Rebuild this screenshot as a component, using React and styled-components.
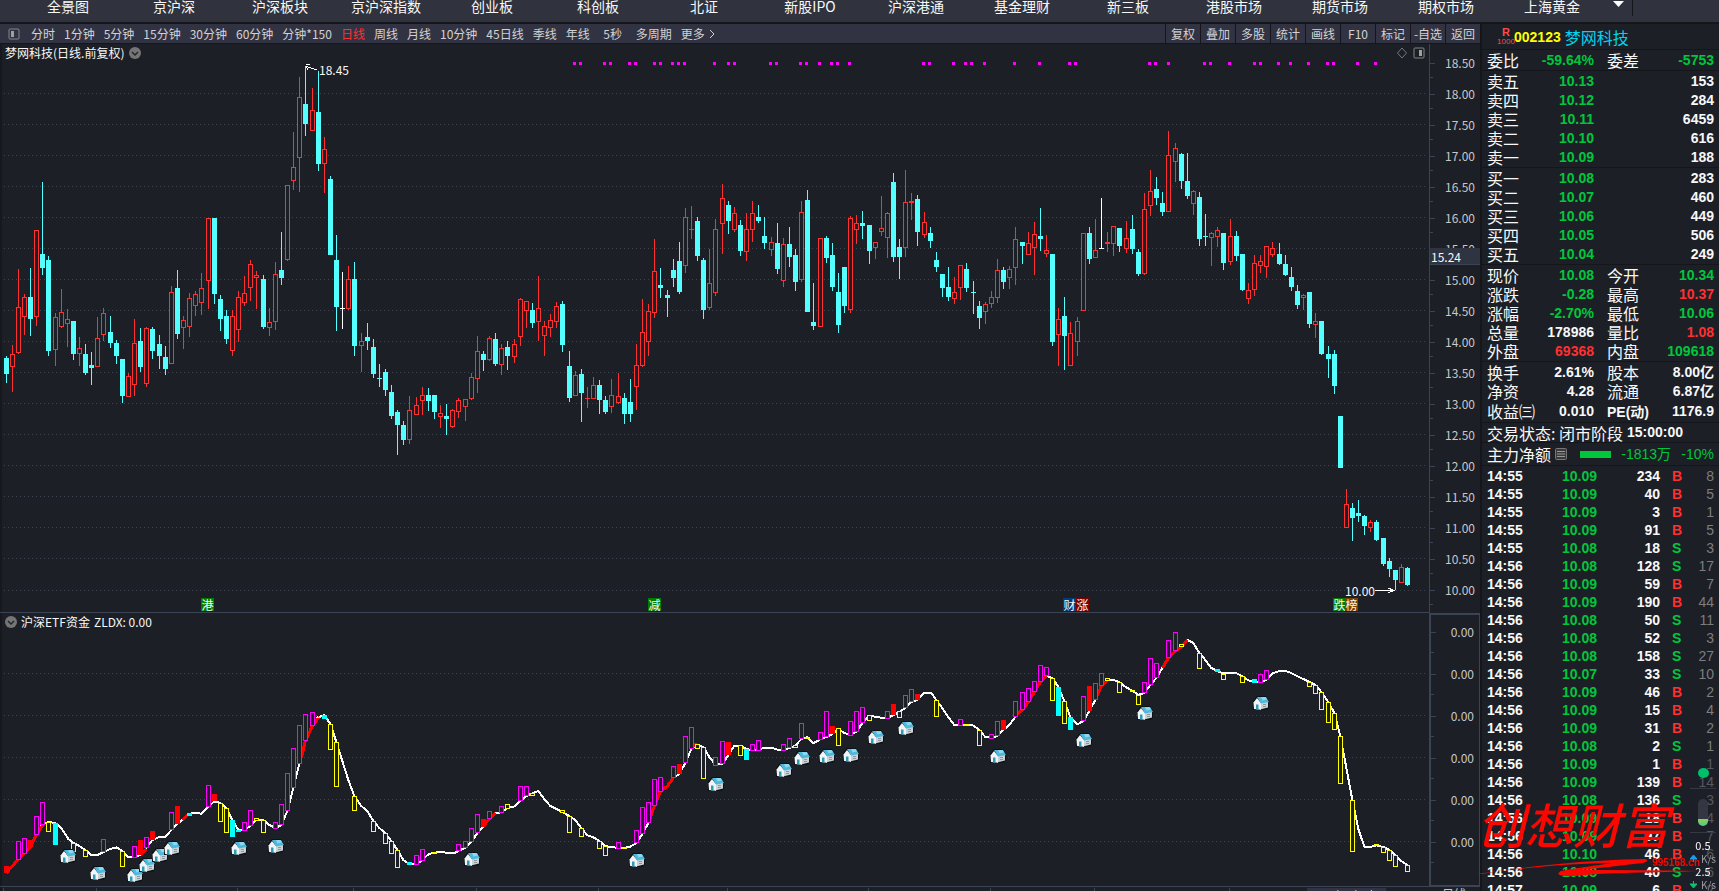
import React from "react";
import styled, { createGlobalStyle, css } from "styled-components";

const C = {
  bg: "#1c1f26",
  menu: "#30333e",
  bar: "#323342",
  rule: "#14161b",
  axis: "#3a4454",
  grid: "#3b4250",
  text: "#d2d2d2",
  white: "#f8f8f8",
  up: "#ff3030",
  down: "#54ffff",
  green: "#00c63c",
  dim: "#7d7d7d",
};

const CJK = '"Noto Sans CJK SC", sans-serif';

const Global = createGlobalStyle`
  * { box-sizing: border-box; }
  body { margin: 0; background: ${C.bg}; color: ${C.white}; font: 12px/16px ${CJK}; overflow: hidden; }
  button { font: inherit; color: inherit; background: none; border: 0; padding: 0; margin: 0; white-space: nowrap; }
  table { border-collapse: collapse; border-spacing: 0; }
`;

/* ---------- data ---------- */

const MENU = ["全景图", "京沪深", "沪深板块", "京沪深指数", "创业板", "科创板", "北证", "新股IPO", "沪深港通", "基金理财", "新三板", "港股市场", "期货市场", "期权市场", "上海黄金"];
const PERIODS = ["分时", "1分钟", "5分钟", "15分钟", "30分钟", "60分钟", "分钟*150", "日线", "周线", "月线", "10分钟", "45日线", "季线", "年线", "5秒", "多周期"];
const TOOLS = ["复权", "叠加", "多股", "统计", "画线", "F10", "标记", "-自选", "返回"];

/* Each block has an origin in chart pixels; rows count in thirds of a pixel:
   centre, high, body top, body bottom, low, kind (u rise, d fall, w flat). */
const CANDLES = [
  [0, 60, `19 888 894 942 969 d|37 855 882 921 996 u|55 627 741 879 882 u|73 702 711 771 825 u|91 624 711 777 828 d|109 510 510 771 798 u|127 366 582 624 645 d|145 588 600 873 888 d|166 759 771 870 918 u|184 687 756 801 804 u|202 747 777 792 861 u|220 783 783 882 900 d|238 831 864 882 918 u|256 852 882 939 945 d|274 876 915 924 975 d|292 771 834 921 921 u|310 744 759 825 843 u|331 768 816 849 864 d|349 840 849 888 912 d|367 897 897 1008 1029 d|385 939 948 1011 1011 u|403 777 849 975 1008 u|421 804 843 921 936 d|439 801 804 972 981 u|457 801 807 873 897 d|478 825 852 888 927 d|496 858 891 927 945 d|514 678 696 912 912 u|532 630 684 822 837 d|550 768 780 804 867 u|568 699 714 801 831 u|586 693 702 738 768 u|604 639 684 729 765 u|625 474 474 663 747 u|643 474 474 702 732 d|661 705 717 777 813 d|679 750 768 837 852 d|697 750 768 873 888 u|715 693 711 810 846 u|733 648 699 729 738 u|751 600 612 684 723 u|769 633 645 654 747 u|790 645 657 801 807 d|808 744 786 804 828 u|826 606 642 786 810 u|844 516 630 654 675 d|862 375 375 600 603 u|880 216 321 363 390 u|898 51 111 294 396 u|916 18 132 192 228 d|937 84 150 213 213 u|955 33 156 312 333 d|973 231 267 312 399 u|991 348 357 585 585 d|1009 525 600 741 813 d|1027 636 744 747 807 w|1045 618 657 747 750 u|1063 606 657 858 888 d|1084 819 843 858 936 u|1102 789 831 843 870 d|1120 837 861 942 954 d|1138 912 954 957 981 d|1156 927 936 990 1008 d|1174 975 996 1068 1077 d|1192 1050 1056 1095 1185 d|1210 1083 1095 1140 1155 d|1228 1008 1050 1140 1152 u|1249 1011 1035 1065 1065 u|1267 981 1005 1023 1065 u|1285 984 1005 1023 1053 d|1303 1005 1005 1056 1077 d|1321 1035 1059 1071 1104 u|1339 1032 1068 1077 1125 d|1357 1047 1050 1101 1104 u|1375 1014 1020 1056 1074 u|1396 1017 1017 1041 1083 u|1414 939 951 1017 1020 u|1432 828 873 957 999 u`],
  [470, 150, `40 603 612 630 663 d|58 558 564 630 633 u|76 549 567 642 648 d|94 582 594 645 675 u|112 573 591 618 660 d|133 567 582 621 639 u|151 444 447 561 588 u|169 453 453 483 534 u|187 459 480 519 534 d|205 378 474 516 573 u|223 513 528 558 618 u|241 492 510 534 561 u|259 456 468 516 534 u|277 453 462 585 606 d|298 603 648 744 756 d|316 663 675 738 738 u|334 657 672 729 816 d|352 711 744 747 774 u|370 681 705 747 747 u|388 690 705 750 792 d|406 738 750 786 792 d|424 687 735 771 789 u|445 669 738 759 762 u|463 729 744 792 822 d|481 687 756 792 816 d|499 582 645 711 780 u|517 447 546 648 651 u|535 462 483 576 618 u|553 267 363 489 504 u|571 354 405 414 444 d|592 420 435 444 501 d|610 327 360 384 411 d|628 276 333 426 432 d|646 174 201 348 369 u|664 168 237 240 267 u|682 201 213 318 333 d|700 324 330 480 507 d|718 297 399 474 480 u|736 207 237 429 438 u|757 102 144 222 312 u|775 153 165 213 252 d|793 171 189 240 246 u|811 210 225 303 318 d|829 189 237 306 333 u|847 153 189 240 276 u|865 165 201 213 219 d|883 201 258 279 297 d|904 261 276 300 318 u|922 219 279 357 372 d|940 264 282 393 411 u|958 231 282 321 351 d|976 297 315 396 423 d|994 153 186 390 396 u|1012 120 150 486 486 d|1030 399 516 528 540 d|1051 264 264 531 531 u|1069 258 264 324 339 d|1087 279 315 411 423 d|1105 369 426 525 549 d|1123 351 351 468 489 d|1141 198 204 480 489 u|1159 195 219 240 282 u|1177 183 219 228 267 d|1198 225 225 303 342 d|1216 276 276 294 327 u|1234 138 234 246 258 u|1252 186 189 264 324 u|1270 69 96 321 336 d|1288 267 291 321 387 d|1306 60 156 294 321 u|1324 129 153 159 210 u|1342 135 147 246 288 d|1363 186 216 255 264 u|1381 231 249 273 294 d|1399 306 330 351 366 d|1417 372 372 414 441 d|1435 351 411 441 453 d`],
  [940, 120, `43 471 516 537 552 u|61 435 435 504 540 u|79 429 447 504 516 d|100 483 516 519 582 d|118 543 558 594 627 d|136 546 552 576 612 u|154 513 531 552 564 u|172 417 450 534 549 u|190 441 450 486 507 d|208 438 447 474 507 u|226 321 357 444 495 u|247 366 366 378 432 d|265 336 369 405 405 u|283 306 342 384 465 u|301 264 348 357 393 d|319 345 390 402 411 u|337 402 402 666 678 d|355 564 597 645 738 u|373 531 588 648 750 d|391 606 639 738 738 u|412 591 603 666 708 u|430 339 339 573 573 u|448 321 339 417 432 d|466 297 390 414 414 u|484 234 384 387 387 w|502 336 366 372 396 u|520 318 318 372 408 u|538 324 324 378 396 d|559 303 354 387 399 u|577 285 327 387 402 d|595 387 396 462 468 d|613 219 267 462 465 u|631 150 213 258 288 u|649 171 207 234 255 d|667 216 249 276 288 d|685 33 105 276 276 u|706 69 84 126 186 u|724 99 102 183 207 d|742 99 183 228 237 d|760 210 213 252 285 u|778 216 231 357 378 d|796 282 348 351 378 d|814 336 339 354 438 u|832 321 330 351 381 u|850 339 339 429 450 d|871 297 348 426 435 u|889 333 348 408 423 d|907 402 402 510 513 d|925 489 510 537 552 u|943 405 429 510 528 u|961 405 423 438 459 u|979 378 378 441 474 u|997 366 384 405 411 u|1018 369 402 432 435 d|1036 405 432 465 468 d|1054 441 471 501 513 d|1072 495 513 555 567 d|1090 522 525 534 570 u|1108 516 516 612 624 d|1126 579 603 615 654 u|1144 603 603 702 705 d|1165 678 702 717 774 d|1183 690 702 798 822 d`],
  [1280, 380, `181 108 108 264 264 d|199 327 372 444 444 u|217 369 384 414 483 d|235 360 399 408 426 d|253 405 408 438 465 d|271 420 426 444 456 u|289 420 426 480 483 d|310 474 474 552 558 d|328 534 543 567 591 d|346 570 570 600 630 d|364 552 561 609 609 u|382 561 564 615 618 d`],
];

/* centre, top, bottom, kind (m/y hollow, r/c solid) */
const BARS = [
  [0, 600, `19 798 819 r|55 723 780 m|73 714 762 m|91 720 741 r|109 648 705 m|127 606 675 m|145 666 696 y|166 669 735 c|220 729 756 y|256 750 771 y|310 717 756 m|367 753 801 y|403 738 774 m|421 720 765 r|439 711 744 m|457 693 720 r|514 636 690 m|532 618 672 r|568 639 648 c|625 555 621 m|643 582 603 r|661 609 666 y|679 624 699 y|697 660 711 c|715 690 696 c|733 666 693 m|751 630 678 m|769 654 663 y|790 660 699 y|826 666 687 m|844 612 675 m|862 519 633 m|880 444 564 m|898 375 492 m|916 342 423 m|937 336 378 m|955 351 354 y|973 345 357 c|991 372 450 y|1009 426 561 y|1063 588 633 y|1120 663 696 y|1156 699 732 y|1174 723 762 y|1192 750 804 y|1228 786 795 c|1249 765 795 m|1267 747 783 m|1303 756 762 y|1375 732 753 m|1396 723 744 m|1414 684 726 m|1432 642 699 m`],
  [470, 600, `40 657 681 r|58 633 657 m|94 618 639 m|112 612 627 y|151 558 603 m|169 558 588 m|187 579 588 y|277 630 639 y|298 648 699 y|334 684 711 y|388 723 747 y|406 738 768 y|445 726 747 m|463 741 747 y|499 690 729 m|517 621 702 m|535 606 669 m|553 537 618 m|571 531 576 m|610 498 534 m|628 492 522 r|646 408 489 m|664 381 447 m|682 432 447 y|700 441 537 y|736 471 498 m|757 423 492 m|775 426 465 r|811 435 468 y|829 447 480 c|847 432 453 m|865 420 453 m|940 432 453 m|958 414 444 m|976 435 444 y|994 369 417 m|1012 411 417 y|1051 396 420 m|1069 333 411 m|1087 378 402 r|1105 384 438 y|1141 363 408 m|1159 333 396 m|1177 321 369 m|1198 345 363 y|1252 333 357 m|1270 312 345 r|1288 333 354 y|1306 285 324 m|1324 267 306 m|1342 282 300 r|1399 300 351 y`],
  [940, 600, `61 357 378 m|79 372 378 y|118 390 438 y|154 402 417 m|172 363 408 m|190 360 390 r|226 303 351 m|247 276 330 m|265 264 306 m|283 243 276 m|301 195 246 m|319 201 228 m|337 234 303 y|355 261 348 c|373 303 372 y|391 351 390 c|430 288 363 m|448 258 333 r|466 249 300 m|484 219 258 m|502 234 243 y|538 246 279 y|577 270 276 y|595 285 315 y|613 246 279 m|631 174 255 m|649 189 234 m|685 120 174 m|706 96 153 m|724 132 141 y|778 159 207 y|832 207 216 c|850 222 240 y|889 219 222 y|907 228 249 y|943 237 249 c|961 222 249 m|979 210 240 m|1108 246 261 y|1126 255 282 y|1144 276 330 y|1165 306 369 y|1183 339 390 y|1201 408 552 y|1237 600 756 y|1309 732 738 y|1330 741 759 y|1348 750 783 y|1366 765 801 y|1402 795 816 y`],
];

const CURVE = [
  [0, 600, "19,819 50,783 91,741 109,705 127,672 145,666 166,669 184,684 205,717 220,729 238,738 256,750 274,765 292,765 310,756 331,747 349,742 367,753 385,771 403,772 421,765 439,744 457,720 478,711 496,710 514,690 532,672 550,657 568,641 586,639 604,641 625,621 643,604 661,609 679,624 697,660 715,690 733,690 751,678 769,660 790,660 808,675 826,684 844,675 862,633 880,564 898,492 916,423 937,378 955,351 973,345 991,372 1009,426 1027,483 1045,540 1063,588 1084,618 1102,633 1120,663 1138,684 1156,699 1174,723 1192,750 1210,780 1228,792 1249,793 1267,780 1285,763 1303,758 1321,756 1339,758 1366,758 1378,751 1396,744"],
  [470, 600, "4,726 22,699 40,681 58,657 76,639 94,637 112,625 133,619 151,603 169,588 187,580 205,573 223,597 241,618 259,627 277,636 298,648 316,660 334,684 352,706 370,712 388,723 406,738 424,742 463,744 481,740 499,729 517,702 535,669 553,618 571,576 592,558 610,534 628,522 646,489 664,447 682,436 700,441 718,471 736,494 757,492 775,465 793,437 811,437 829,447 847,450 865,450 883,443 904,443 922,449 940,450 958,444 976,437 994,417 1012,411 1030,430 1051,418 1069,411 1087,402 1105,387 1123,399 1141,404 1159,396 1177,369 1198,347 1216,350 1234,353 1252,354 1270,345 1288,336 1306,324 1324,306 1342,300 1363,279 1384,279 1399,300"],
  [940, 600, "0,315 25,351 43,375 61,375 97,375 118,390 136,411 154,413 172,408 190,390 208,375 226,351 247,330 265,306 283,276 301,246 319,228 337,234 355,261 373,303 391,351 412,373 430,363 448,333 466,300 484,258 502,240 520,239 538,247 559,262 577,272 595,284 613,279 631,255 649,234 667,204 685,174 706,153 724,141 742,120 760,129 778,159 796,180 814,204 832,213 850,220 889,220 907,228 925,241 943,245 961,246 979,240 997,220 1018,213 1036,213 1054,219 1072,229 1090,237 1108,246 1126,255 1144,276 1165,306 1183,339 1201,408 1219,504 1237,600 1255,687 1273,740 1291,741 1309,736 1330,741 1348,750 1366,765 1384,783 1402,795"],
];
const SURGES = [
  [0, 600, "19,819 50,783 91,741 109,705 130,672"],
  [0, 600, "421,765 439,747"],
  [0, 600, "547,660 568,641"],
  [0, 600, "904,474 916,423 937,378 958,351"],
  [470, 600, "40,678 58,657 76,639"],
  [470, 600, "538,664 553,618 571,576 592,558 610,534"],
  [470, 600, "664,438 682,432"],
  [940, 600, "229,345 247,330 265,306 283,276 301,246 319,228"],
  [940, 600, "466,300 484,258 502,240"],
  [940, 600, "667,204 685,174 706,153 724,141 742,120"],
];
const HOUSES = [[68, 856], [98, 873], [135, 875], [147, 865], [160, 855], [172, 848], [239, 848], [276, 846], [472, 859], [637, 860], [716, 784], [784, 770], [802, 758], [827, 756], [851, 755], [876, 737], [906, 728], [998, 756], [1084, 740], [1145, 713], [1261, 703]];
const NOTICES = [573, 579, 603, 609, 628, 634, 653, 659, 671, 677, 683, 713, 727, 733, 769, 775, 799, 805, 818, 830, 836, 848, 922, 928, 952, 964, 970, 983, 1013, 1038, 1068, 1074, 1148, 1154, 1167, 1203, 1209, 1228, 1253, 1259, 1277, 1289, 1307, 1326, 1332, 1356, 1374];
const EVENTS = [["港", 201, "#007c00"], ["减", 648, "#007c00"], ["财", 1063, "#003c78"], ["涨", 1076, "#7c0000"], ["跌", 1333, "#007c00"], ["榜", 1345, "#7c4000"]];
const PRICES = ["18.50", "18.00", "17.50", "17.00", "16.50", "16.00", "15.50", "15.00", "14.50", "14.00", "13.50", "13.00", "12.50", "12.00", "11.50", "11.00", "10.50", "10.00"];
const MONTHS = [["2023", 3], ["3", 96], ["4", 237], ["5", 353], ["6", 476], ["7", 598], ["8", 727], ["9", 868], ["10", 990], ["11", 1094], ["12", 1229]];

const BOOK = [
  [["委比", "-59.64%", "g", "委差", "-5753", "g"]],
  [["卖五", "10.13", "g", "", "153"], ["卖四", "10.12", "g", "", "284"], ["卖三", "10.11", "g", "", "6459"], ["卖二", "10.10", "g", "", "616"], ["卖一", "10.09", "g", "", "188"]],
  [["买一", "10.08", "g", "", "283"], ["买二", "10.07", "g", "", "460"], ["买三", "10.06", "g", "", "449"], ["买四", "10.05", "g", "", "506"], ["买五", "10.04", "g", "", "249"]],
  [["现价", "10.08", "g", "今开", "10.34", "g"], ["涨跌", "-0.28", "g", "最高", "10.37", "r"], ["涨幅", "-2.70%", "g", "最低", "10.06", "g"], ["总量", "178986", "", "量比", "1.08", "r"], ["外盘", "69368", "r", "内盘", "109618", "g"]],
  [["换手", "2.61%", "", "股本", "8.00亿"], ["净资", "4.28", "", "流通", "6.87亿"], ["收益㈢", "0.010", "", "PE(动)", "1176.9"]],
];

const TICKS = `14:55 10.09 234 B 8|14:55 10.09 40 B 5|14:55 10.09 3 B 1|14:55 10.09 91 B 5|14:55 10.08 18 S 3|14:56 10.08 128 S 17|14:56 10.09 59 B 7|14:56 10.09 190 B 44|14:56 10.08 50 S 11|14:56 10.08 52 S 3|14:56 10.08 158 S 27|14:56 10.07 33 S 10|14:56 10.09 46 B 2|14:56 10.09 15 B 4|14:56 10.09 31 B 2|14:56 10.08 2 S 1|14:56 10.09 1 B 1|14:56 10.09 139 B 14|14:56 10.08 136 S 3|14:56 10.09 18 B 4|14:56 10.09 97 B 7|14:56 10.10 46 B 6|14:56 10.08 40 S 6|14:57 10.09 6 B 2`
  .split("|").map((r) => r.split(" "));

/* ---------- layout ---------- */

const Page = styled.div`
  display: flex;
  flex-direction: column;
  height: 100vh;
  overflow: hidden;
  background: ${C.bg};
`;
const MenuBar = styled.nav`
  flex: none;
  display: flex;
  align-items: flex-start;
  height: 24px;
  padding-left: 15px;
  overflow: hidden;
  background: ${C.menu};
  border-bottom: 2px solid ${C.rule};
`;
const MenuItem = styled.button`
  flex: 0 1 106px;
  height: 12px;
  font-size: 14px;
  line-height: 12px;
  text-align: center;
`;
const MenuMore = styled.button`
  flex: none;
  display: flex;
  justify-content: center;
  width: 28px;
  height: 16px;
  border-right: 1px solid ${C.rule};
`;
const Body = styled.div`
  flex: 1;
  min-height: 0;
  display: flex;
`;
const Main = styled.main`
  flex: 1;
  min-width: 0;
  display: flex;
  flex-direction: column;
`;
const Toolbar = styled.div`
  flex: none;
  display: flex;
  align-items: center;
  height: 20px;
  padding-left: 8px;
  background: ${C.bar};
  border-bottom: 1px solid ${C.rule};
  color: ${C.text};
`;
const Periods = styled.div`
  flex: 1;
  display: flex;
  align-items: center;
  gap: 9px;
  padding-left: 11px;
`;
const Period = styled.button`
  display: flex;
  align-items: center;
  justify-content: center;
  gap: 4px;
  color: ${(p) => (p.$on ? C.up : C.text)};
  ${(p) => p.$wide && css`min-width: 28px;`}
`;
const Tool = styled.button`
  width: 35px;
  height: 19px;
  border-left: 1px solid ${C.rule};
`;
const Work = styled.div`
  flex: 1;
  min-height: 0;
  display: flex;
`;
const Charts = styled.div`
  flex: 1;
  min-width: 0;
  display: flex;
  flex-direction: column;
  box-shadow: inset 2px 0 0 #16181e;
`;
const Head = styled.header`
  flex: none;
  display: flex;
  align-items: center;
  gap: ${(p) => p.$gap || 5}px;
  height: 17px;
  padding: 1px 4px 0 5px;
`;
const Spacer = styled.span`
  flex: 1;
`;
const Plot = styled.div`
  position: relative;
  flex: none;
  height: ${(p) => p.$h}px;
  border-bottom: 1px solid ${C.axis};
  svg { display: block; width: 100%; height: 100%; }
`;
const Mark = styled.span`
  position: absolute;
  top: ${(p) => p.$top}px;
  font-size: 12px;
  line-height: 14px;
  white-space: nowrap;
`;
const EventTag = styled(Mark)`
  width: 13px;
  height: 13px;
  line-height: 13px;
  text-align: center;
  background: ${(p) => p.$bg};
`;
const Dates = styled.div`
  position: relative;
  flex: none;
  height: 20px;
`;
const Month = styled(Mark)`
  padding-left: 4px;
  border-left: 1px solid ${C.axis};
`;
const Today = styled(Mark)`
  width: 79px;
  background: ${C.bar};
`;

const Axis = styled.aside`
  flex: none;
  width: 51px;
  color: #c8c8c8;
`;
const Scale = styled.ul`
  position: relative;
  margin: 0;
  list-style: none;
  padding: ${(p) => p.$pad}px 5px 0 0;
  height: ${(p) => p.$h}px;
  ${(p) => p.$framed
    ? css`border: 2px solid ${C.axis}; border-right-width: 1px;`
    : css`border-left: 1px solid ${C.axis};`}
`;
const ScaleStep = styled.li`
  position: relative;
  height: ${(p) => p.$h}px;
  line-height: ${(p) => p.$h}px;
  text-align: right;
  &:first-child { margin-top: ${(p) => p.$lift || 0}px; }
  &::before, &::after { content: ""; position: absolute; left: 0; height: 1px; background: ${C.axis}; }
  &::before { top: 50%; width: 5px; }
  &::after { bottom: 0; width: 3px; }
`;
const Cursor = styled.span`
  position: absolute;
  left: 0;
  right: 0;
  top: 204px;
  height: 17px;
  line-height: 17px;
  padding-left: 1px;
  color: ${C.white};
  background: #2f3441;
  border-bottom: 1px solid ${C.axis};
`;
const AxisFoot = styled.div`
  padding-left: 13px;
  font-size: 12px;
  line-height: 14px;
`;

const Side = styled.section`
  flex: none;
  width: 239px;
  border-left: 2px solid ${C.rule};
  overflow: hidden;
`;
const StockHead = styled.h1`
  display: flex;
  align-items: center;
  gap: 4px;
  height: 26px;
  margin: 0;
  padding-left: 16px;
  border-bottom: 1px solid ${C.rule};
  font-size: 16px;
  line-height: 20px;
  font-weight: 400;
  color: #00d4f0;
`;
const Rank = styled.span`
  display: flex;
  flex-direction: column;
  align-items: center;
  width: 16px;
  margin-right: -4px;
  color: #ff4a4a;
  font: 8px/9px "Liberation Sans", sans-serif;
`;
const RankMark = styled.b`
  font-size: 11px;
`;
const Code = styled.span`
  color: #ffff00;
  font: bold 14px/20px "Liberation Sans", sans-serif;
`;
const tone = (t) => (t === "g" ? C.green : t === "r" ? C.up : C.white);
const Quotes = styled.table`
  table-layout: fixed;
  width: 100%;
  border-bottom: 1px solid ${C.rule};
  border-collapse: separate;
  padding-top: 1px;
`;
const Label = styled.th`
  height: 19px;
  padding: 0 0 0 ${(p) => (p.$second ? 13 : 5)}px;
  font-size: 16px;
  line-height: 19px;
  font-weight: 400;
  text-align: left;
  white-space: nowrap;
`;
const Value = styled.td`
  height: 19px;
  padding: 0 ${(p) => (p.$last ? 5 : 0)}px 0 0;
  color: ${(p) => tone(p.$tone)};
  font: bold 14px/19px "Liberation Sans", ${CJK};
  text-align: right;
  white-space: nowrap;
`;
const Latin = styled.b`
  font: bold 14px/19px "Liberation Sans", ${CJK};
`;
const Status = styled.p`
  display: flex;
  align-items: center;
  gap: 4px;
  height: 20px;
  margin: 0;
  padding-left: 5px;
  border-bottom: 1px solid ${C.rule};
  font-size: 16px;
  line-height: 18px;
  white-space: nowrap;
`;
const Flow = styled(Status)`
  height: 23px;
  padding-right: 5px;
`;
const FlowBar = styled.span`
  width: 31px;
  height: 7px;
  margin-left: 9px;
  background: ${C.green};
`;
const FlowText = styled.span`
  margin-left: ${(p) => (p.$push ? "auto" : 0)};
  color: ${C.green};
  font: 14px/20px "Liberation Sans", ${CJK};
  white-space: nowrap;
`;
const Trades = styled.table`
  table-layout: fixed;
  width: 100%;
  margin-top: 1px;
`;
const Cell = styled.td`
  height: 18px;
  padding: 0 ${(p) => p.$pr || 0}px 0 ${(p) => p.$pl || 0}px;
  color: ${(p) => p.$color || C.white};
  font: ${(p) => (p.$thin ? "normal" : "bold")} 14px/18px "Liberation Sans", sans-serif;
  text-align: ${(p) => p.$align || "right"};
`;

const Stamp = styled.div`
  position: fixed;
  right: 18px;
  bottom: 12px;
  width: 224px;
  height: 84px;
  color: #f80800;
  svg { position: absolute; left: 0; bottom: 0; }
`;
const StampName = styled.span`
  position: absolute;
  left: 0;
  top: 0;
  font: italic 500 48px/56px ${CJK};
  white-space: nowrap;
`;
const StampSite = styled.span`
  position: absolute;
  right: 1px;
  bottom: 10px;
  font: bold 10px/12px "Liberation Sans", sans-serif;
`;
const Gauge = styled.aside`
  position: fixed;
  right: 0;
  bottom: 0;
  display: flex;
  flex-direction: column;
  align-items: center;
  width: 32px;
  height: 134px;
  padding-top: 11px;
  border-radius: 8px 0 0 0;
  background: rgba(31, 33, 42, 0.4);
  font-size: 11px;
  line-height: 13px;
`;
const Dot = styled.span`
  width: 11px;
  height: 11px;
  border-radius: 50%;
  background: #00bf6b;
`;
const Line = styled.span`
  width: 26px;
  height: 1px;
  margin: ${(p) => p.$gap}px 0;
  background: #343843;
`;
const Pill = styled.span`
  width: 10px;
  height: 30px;
  border-radius: 5px;
  background: linear-gradient(#343741 0 20px, #8fd04c 20px, #35c6b0 30px);
`;
const Rate = styled.span`
  display: flex;
  align-items: center;
  gap: 4px;
  color: ${(p) => (p.$dim ? "#9a9ca2" : C.white)};
  font-size: ${(p) => (p.$dim ? 10 : 11)}px;
`;

/* ---------- drawings ---------- */

const px = (v, o) => Math.round(v / 3) + o;
const rows = (blocks) => blocks.flatMap(([ox, oy, s]) =>
  s.split("|").map((r) => {
    const p = r.split(" ");
    const kind = p.pop();
    const [x, ...ys] = p.map(Number);
    return { x: Math.floor(x / 3) + ox, ys: ys.map((y) => px(y, oy)), kind };
  }));
const path = (blocks) => blocks.map(([ox, oy, s]) =>
  s.split(" ").map((q) => {
    const [x, y] = q.split(",");
    return `${x / 3 + ox},${y / 3 + oy}`;
  }).join(" ")).join(" ");

function Body5({ x, top, bottom, color, hollow }) {
  const h = Math.max(1, bottom - top);
  return hollow && h > 2
    ? <rect x={x - 1.5} y={top + 0.5} width="4" height={h - 1} fill={C.bg} stroke={color} />
    : <rect x={x - 2} y={top} width="5" height={h} fill={color} />;
}

function GridLines({ ys }) {
  return ys.map((y) => (
    <line key={y} x1="4" x2="1426" y1={y + 0.5} y2={y + 0.5} stroke={C.grid} strokeDasharray="1 3" />
  ));
}

function PriceChart() {
  const ink = { u: C.up, d: C.down, w: "#fff" };
  return (
    <svg viewBox="0 61 1429 551" preserveAspectRatio="none" shapeRendering="crispEdges">
      <GridLines ys={[93, 124, 155, 186, 217, 248, 279, 310, 341, 372, 403, 434, 465, 496, 527, 558, 590]} />
      {NOTICES.map((x) => <rect key={x} x={x} y="62" width="3" height="3" fill="#ff00ff" />)}
      {rows(CANDLES).map(({ x, ys: [h, t, b, l], kind }) => (
        <g key={x}>
          <rect x={x} y={h} width="1" height={Math.max(0, l - h)} fill={ink[kind]} />
          <Body5 x={x} top={t} bottom={b} color={ink[kind]} hollow={kind === "u"} />
        </g>
      ))}
      <path d="M306 66.5L317 70M306 64.5h4M306 66l2 4" stroke="#fff" fill="none" />
      <path d="M1375 590.5h18M1388 588l6 2.500l-6 2.500" stroke="#fff" fill="none" />
    </svg>
  );
}

function House({ x, y }) {
  return (
    <g transform={`translate(${x - 8} ${y - 7})`}>
      <path d="M0 5L4 0h9l3 5v6l-2 2.500-8 .5H0z" fill="#0b1013" />
      <path d="M7 7l8-2v6.500L7 13.500z" fill="#c9d2d7" />
      <path d="M.5 6.500L4 2l4 5v6.800L1 13z" fill="#f2f5f7" />
      <path d="M4 1h9l3 5-8 1.500z" fill="#4db9dc" />
      <path d="M8 1h4.500l1.500 2.500-4.500 1z" fill="#8ad9ee" />
      <path d="M3 8.500h2.500v5H3z" fill="#2d9cb8" />
      <path d="M10 8.500h3M10 10.500h3" stroke="#8d979d" />
    </g>
  );
}

function FundChart() {
  const ink = { m: "#ff00ff", y: "#ffff00", r: "#ff0000", c: "#00ffff" };
  return (
    <svg viewBox="0 630 1429 256" preserveAspectRatio="none">
      <g shapeRendering="crispEdges">
        <GridLines ys={[673, 715, 757, 799, 841]} />
        <polyline points={path(CURVE)} fill="none" stroke="#fff" strokeWidth="2" />
        {SURGES.map((s, i) => <polyline key={i} points={path([s])} fill="none" stroke="#f00" strokeWidth="3" />)}
        {rows(BARS).map(({ x, ys: [t, b], kind }) => (
          <Body5 key={x} x={x} top={t} bottom={b} color={ink[kind]} hollow={kind === "m" || kind === "y"} />
        ))}
      </g>
      {HOUSES.map(([x, y]) => <House key={x} x={x} y={y} />)}
    </svg>
  );
}

const Chevron = () => (
  <svg width="12" height="12" viewBox="0 0 12 12">
    <circle cx="6" cy="6" r="6" fill="#757575" />
    <path d="M3 5l3 3 3-3" fill="none" stroke="#23262d" strokeWidth="1.500" />
  </svg>
);
const PanelIcon = ({ right }) => (
  <svg width="12" height="12" viewBox="0 0 12 12">
    <rect x="1" y="1" width="10" height="10" rx="1" fill="none" stroke="#858585" />
    <rect x={right ? 6 : 3} y="3" width="3" height="6" fill="#a0a0a0" />
  </svg>
);
const at = (x) => ({ left: `${(x / 1429) * 100}%` });

export default function App() {
  return (
    <Page>
      <Global />
      <MenuBar>
        {MENU.map((m) => <MenuItem key={m}>{m}</MenuItem>)}
        <MenuMore aria-label="更多市场">
          <svg width="11" height="8" viewBox="0 0 11 8"><path d="M0 1h11L5.500 7z" fill="#fff" /></svg>
        </MenuMore>
      </MenuBar>
      <Body>
        <Main>
          <Toolbar>
            <PanelIcon />
            <Periods>
              {PERIODS.map((p) => <Period key={p} $on={p === "日线"} $wide={p === "5秒"}>{p}</Period>)}
              <Period>
                更多
                <svg width="6" height="10" viewBox="0 0 6 10"><path d="M1 1l4 4-4 4" fill="none" stroke={C.text} /></svg>
              </Period>
            </Periods>
            {TOOLS.map((t) => <Tool key={t}>{t}</Tool>)}
          </Toolbar>
          <Work>
            <Charts>
              <Head>
                <span>梦网科技(日线.前复权)</span>
                <Chevron />
                <Spacer />
                <svg width="12" height="12" viewBox="0 0 12 12"><path d="M6 1l4.500 5L6 11 1.500 6z" fill="none" stroke="#777" /></svg>
                <PanelIcon right />
              </Head>
              <Plot $h={552}>
                <PriceChart />
                <Mark $top={2} style={at(319)}>18.45</Mark>
                <Mark $top={523} style={at(1345)}>10.00</Mark>
                {EVENTS.map(([t, x, bg]) => <EventTag key={t} $top={537} $bg={bg} style={at(x)}>{t}</EventTag>)}
              </Plot>
              <Head $gap={4}>
                <Chevron />
                <span>沪深ETF资金</span>
                <span>ZLDX: 0.00</span>
              </Head>
              <Plot $h={257}>
                <FundChart />
              </Plot>
              <Dates>
                {MONTHS.map(([m, x]) => <Month key={m} $top={1} style={at(x)}>{m}</Month>)}
                <Today $top={1} style={at(1307)}>2024/01/22|</Today>
              </Dates>
            </Charts>
            <Axis>
              <Scale $pad={3} $h={569}>
                {PRICES.map((p) => <ScaleStep key={p} $h={31}>{p}</ScaleStep>)}
                <Cursor>15.24</Cursor>
              </Scale>
              <Scale $framed $h={274} $pad={0}>
                {[1, 2, 3, 4, 5, 6].map((n) => <ScaleStep key={n} $h={42} $lift={-4}>0.00</ScaleStep>)}
              </Scale>
              <AxisFoot>日线</AxisFoot>
            </Axis>
          </Work>
        </Main>
        <Side>
          <StockHead>
            <Rank><RankMark>R</RankMark>1000</Rank>
            <Code>002123</Code>
            梦网科技
          </StockHead>
          {BOOK.map((block, i) => (
            <Quotes key={i}>
              <colgroup><col width="52" /><col width="60" /><col width="60" /><col /></colgroup>
              <tbody>
                {block.map(([l1, v1, t1, l2, v2, t2]) => (
                  <tr key={l1}>
                    <Label scope="row">{l1}</Label>
                    <Value $tone={t1}>{v1}</Value>
                    <Label $second scope="row">{l2.startsWith("PE") ? <Latin>{l2}</Latin> : l2}</Label>
                    <Value $tone={t2} $last>{v2}</Value>
                  </tr>
                ))}
              </tbody>
            </Quotes>
          ))}
          <Status>交易状态: 闭市阶段<Latin>15:00:00</Latin></Status>
          <Flow>
            主力净额
            <svg width="12" height="12" viewBox="0 0 12 12">
              <rect x=".5" y=".5" width="11" height="11" rx="1" fill="#3a3a3a" stroke="#777" />
              <path d="M2 3.500h8M2 6h8M2 8.500h8" stroke="#999" />
            </svg>
            <FlowBar />
            <FlowText $push>-1813万</FlowText>
            <FlowText $push>-10%</FlowText>
          </Flow>
          <Trades>
            <colgroup><col width="52" /><col width="63" /><col width="63" /><col width="27" /><col /></colgroup>
            <tbody>
              {TICKS.map(([time, price, vol, side, n], i) => (
                <tr key={i}>
                  <Cell $align="left" $pl={5}>{time}</Cell>
                  <Cell $color={C.green}>{price}</Cell>
                  <Cell>{vol}</Cell>
                  <Cell $align="left" $pl={12} $color={side === "B" ? C.up : C.green}>{side}</Cell>
                  <Cell $pr={5} $thin $color={C.dim}>{n}</Cell>
                </tr>
              ))}
            </tbody>
          </Trades>
        </Side>
      </Body>
      <Gauge>
        <Dot />
        <Line $gap={10} />
        <Pill />
        <Line $gap={6} />
        <Rate>0.5</Rate>
        <Rate $dim>
          <svg width="7" height="7" viewBox="0 0 7 7"><path d="M3.500 7V2M0 4l3.500-4L7 4z" fill="#18a0f0" stroke="#18a0f0" /></svg>
          K/s
        </Rate>
        <Rate>2.5</Rate>
        <Rate $dim>
          <svg width="7" height="7" viewBox="0 0 7 7"><path d="M3.500 0v5M0 3l3.500 4L7 3z" fill="#10c070" stroke="#10c070" /></svg>
          K/s
        </Rate>
      </Gauge>
      <Stamp>
        <StampName>创想财富</StampName>
        <svg width="224" height="30" viewBox="0 0 224 30">
          <path d="M5 25C50 17 110 11 168 10c4 1 2 3-2 4-25 3-45 5-64 7 40 0 80 0 120 1-44 2-92 1-124 5-20 1-18-3-14-5 14-3 40-6 50-8-50 1-90 5-134 11z" fill="#f80800" />
        </svg>
        <StampSite>995168.cn</StampSite>
      </Stamp>
    </Page>
  );
}
